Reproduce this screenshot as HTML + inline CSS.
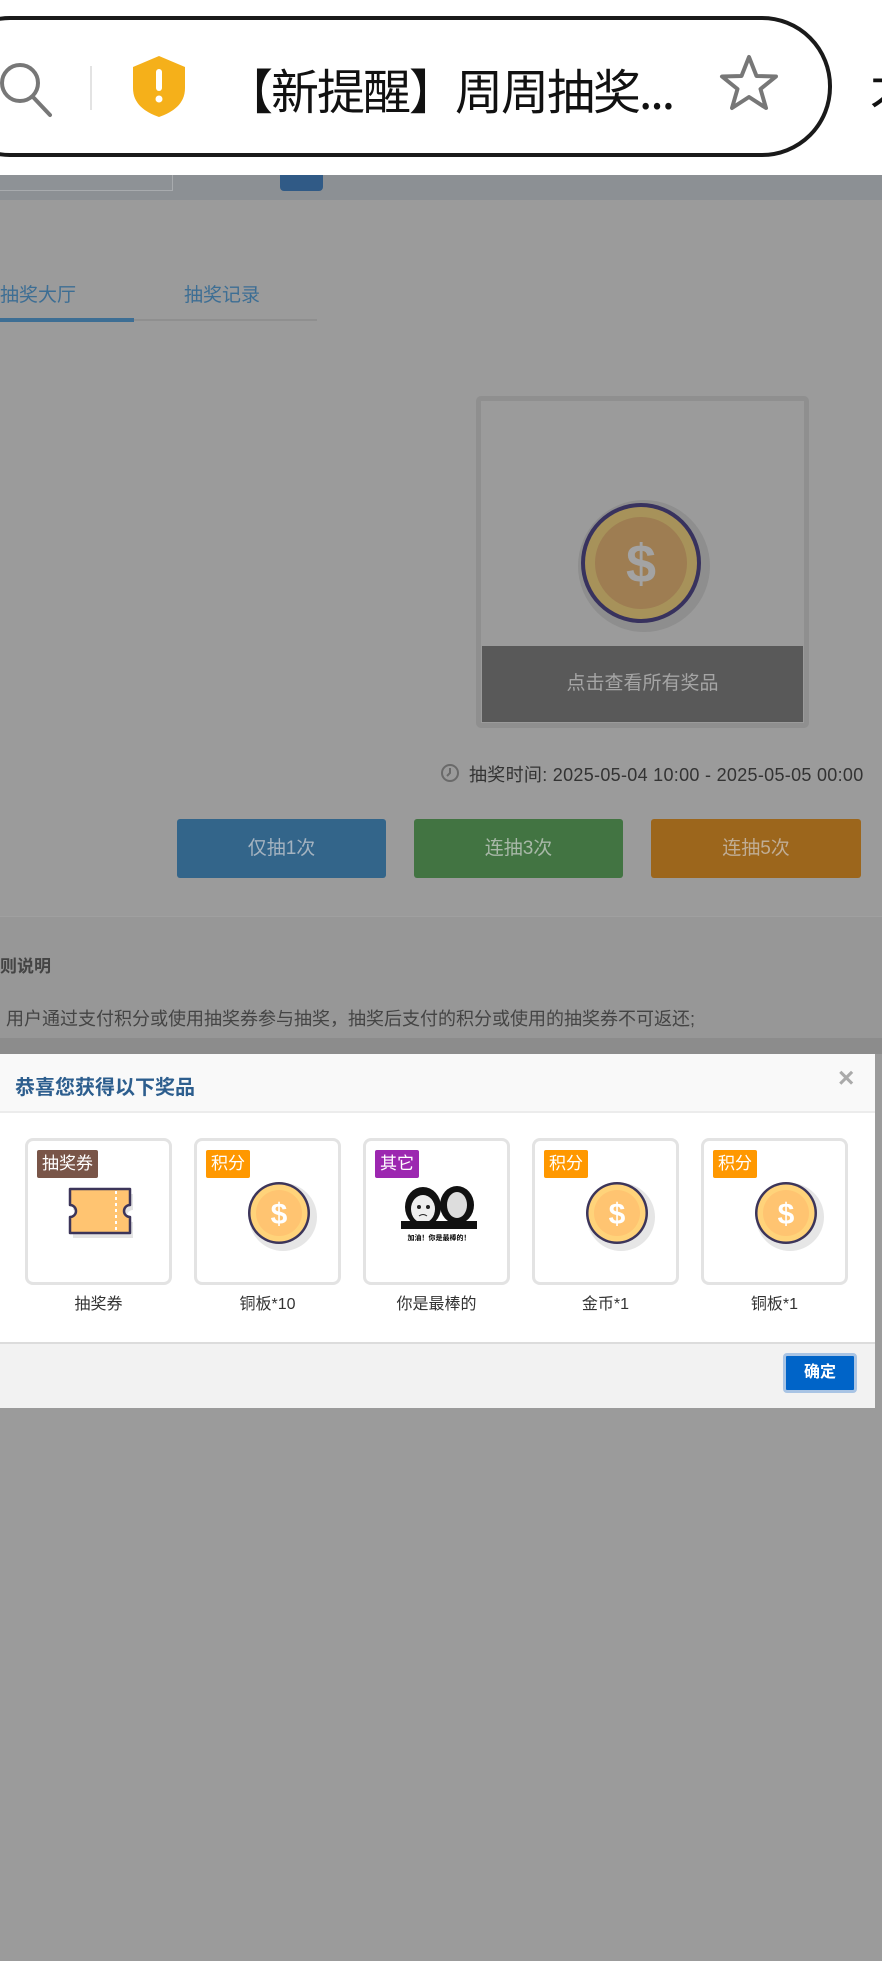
<!DOCTYPE html>
<html><head><meta charset="utf-8"><style>
*{margin:0;padding:0;box-sizing:border-box}
body{width:882px;height:1961px;position:relative;overflow:hidden;background:#9b9b9b;font-family:"Liberation Sans","Noto Sans CJK SC",sans-serif}
.a{position:absolute}
.card{position:absolute;top:1138px;width:147px;height:147px;border:3px solid #e3e3e3;border-radius:8px;background:#fff}
.badge{position:absolute;left:9px;top:9px;height:28px;color:#fff;font-size:17px;line-height:28px;padding:0 5px;border-radius:2px}
.lbl{position:absolute;top:1290px;width:147px;text-align:center;font-size:16px;color:#333}
.coin{position:absolute;left:48px;top:38px}
</style></head><body>
<div class="a" style="left:0;top:0;width:882px;height:175px;background:#fff"></div>
<div class="a" style="left:-60px;top:16px;width:892px;height:141px;border:4px solid #1a1a1a;border-radius:70px;background:#fff"></div>
<svg class="a" style="left:0;top:55px" width="60" height="65" viewBox="0 0 60 65"><circle cx="20" cy="28" r="18" fill="none" stroke="#777" stroke-width="4"/><line x1="33" y1="42" x2="50" y2="60" stroke="#777" stroke-width="4" stroke-linecap="round"/></svg>
<div class="a" style="left:90px;top:66px;width:2px;height:44px;background:#e3e3e3"></div>
<svg class="a" style="left:131px;top:54px" width="56" height="64" viewBox="0 0 56 64"><path d="M28 2 L54 13 V34 C54 50 42 58 28 63 C14 58 2 50 2 34 V13 Z" fill="#f5b01a"/><rect x="25" y="15" width="6" height="22" rx="3" fill="#fff"/><circle cx="28" cy="45" r="3.5" fill="#fff"/></svg>
<div class="a" style="left:225px;top:56px;font-size:48px;line-height:64px;color:#111;font-family:'Noto Sans CJK SC',sans-serif;letter-spacing:-2px">【新提醒】周周抽奖...</div>
<svg class="a" style="left:717px;top:52px" width="64" height="64" viewBox="0 0 64 64"><path d="M32 5 L39.5 24 L59 24.5 L43.5 37 L49 56 L32 45 L15 56 L20.5 37 L5 24.5 L24.5 24 Z" fill="none" stroke="#777" stroke-width="4" stroke-linejoin="round"/></svg>
<div class="a" style="left:870px;top:56px;font-size:48px;line-height:64px;color:#111;font-family:'Noto Sans CJK SC',sans-serif">才</div>
<div class="a" style="left:0;top:175px;width:882px;height:25px;background:#8c9094"></div>
<div class="a" style="left:-2px;top:175px;width:175px;height:16px;border:1px solid #a8abae;border-top:none;background:#8e9296"></div>
<div class="a" style="left:280px;top:175px;width:43px;height:16px;background:#305a86;border-radius:0 0 4px 4px"></div>
<div class="a" style="left:0;top:280px;font-size:19px;color:#3d6e94">抽奖大厅</div>
<div class="a" style="left:184px;top:280px;font-size:19px;color:#3d6e94">抽奖记录</div>
<div class="a" style="left:0;top:319px;width:317px;height:2px;background:#8f8f8f"></div>
<div class="a" style="left:0;top:318px;width:134px;height:4px;background:#3d6e94"></div>
<div class="a" style="left:476px;top:396px;width:333px;height:332px;border:5px solid #8f8f8f;border-radius:5px;background:#9b9b9b"></div>
<div class="a" style="left:482px;top:646px;width:321px;height:76px;background:#595959;color:#a5a5a5;font-size:19px;line-height:76px;text-align:center">点击查看所有奖品</div>
<svg class="a" style="left:572px;top:494px" width="142" height="142" viewBox="0 0 142 142"><circle cx="72" cy="72" r="66" fill="#8e8e8e"/><circle cx="69" cy="69" r="60" fill="#38325e"/><circle cx="69" cy="69" r="56" fill="#a7925a"/><circle cx="69" cy="69" r="46" fill="#9e7d52"/><text x="69" y="88" text-anchor="middle" font-size="54" font-weight="bold" fill="#a3a3a3" font-family="Liberation Sans">$</text></svg>
<svg class="a" style="left:440px;top:763px" width="20" height="20" viewBox="0 0 20 20"><circle cx="10" cy="10" r="8" fill="none" stroke="#6a6a6a" stroke-width="2"/><path d="M10 5 V10 L7 13" fill="none" stroke="#6a6a6a" stroke-width="2"/></svg>
<div class="a" style="left:469px;top:761px;font-size:18px;color:#333;letter-spacing:0.3px">抽奖时间: 2025-05-04 10:00 - 2025-05-05 00:00</div>
<div class="a" style="left:177px;top:819px;width:209px;height:59px;background:#33658a;border-radius:3px;color:#a5b3c0;font-size:19px;line-height:59px;text-align:center">仅抽1次</div>
<div class="a" style="left:414px;top:819px;width:209px;height:59px;background:#427442;border-radius:3px;color:#a8b8a8;font-size:19px;line-height:59px;text-align:center">连抽3次</div>
<div class="a" style="left:651px;top:819px;width:210px;height:59px;background:#9c661c;border-radius:3px;color:#c0ad95;font-size:19px;line-height:59px;text-align:center">连抽5次</div>
<div class="a" style="left:0;top:916px;width:882px;height:122px;background:#979797;border-top:1px solid #a0a0a0"></div>
<div class="a" style="left:0;top:952px;font-size:17px;font-weight:bold;color:#444">则说明</div>
<div class="a" style="left:6px;top:1005px;font-size:18px;color:#444">用户通过支付积分或使用抽奖券参与抽奖，抽奖后支付的积分或使用的抽奖券不可返还;</div>
<div class="a" style="left:0;top:1038px;width:882px;height:16px;background:#8c8c8c"></div>
<div class="a" style="left:0;top:1054px;width:875px;height:354px;background:#fff"></div>
<div class="a" style="left:0;top:1054px;width:875px;height:59px;background:#f9f9f9;border-bottom:2px solid #ececec"></div>
<div class="a" style="left:15px;top:1071px;font-size:20px;font-weight:bold;color:#2d5e8e">恭喜您获得以下奖品</div>
<div class="a" style="left:838px;top:1062px;font-size:28px;color:#aaa;font-weight:bold">×</div>
<div class="a" style="left:0;top:1342px;width:875px;height:66px;background:#f2f2f2;border-top:2px solid #dcdcdc"></div>
<div class="a" style="left:783px;top:1353px;width:74px;height:40px;background:#0064c8;border:3px solid #a9c4e4;border-radius:4px;color:#fff;font-size:16px;font-weight:bold;line-height:34px;text-align:center">确定</div>

<div class="card" style="left:25px"><div class="badge" style="background:#795548">抽奖券</div>
<svg class="a" style="left:36px;top:44px" width="76" height="62" viewBox="0 0 76 62"><path d="M6 4 H66 V20 A6 6 0 0 0 66 32 V48 H6 V32 A6 6 0 0 0 6 20 Z" fill="#e4e4e4" transform="translate(3,5)"/><path d="M6 4 H66 V20 A6 6 0 0 0 66 32 V48 H6 V32 A6 6 0 0 0 6 20 Z" fill="#ffc471" stroke="#3c355a" stroke-width="2.5" stroke-linejoin="round"/><line x1="52" y1="6" x2="52" y2="46" stroke="#fff" stroke-width="2" stroke-dasharray="3 3"/></svg></div>
<div class="lbl" style="left:25px">抽奖券</div>

<svg width="0" height="0" style="position:absolute"><defs><g id="cn"><circle cx="38" cy="38" r="34" fill="#e6e6e6"/><circle cx="34" cy="34" r="31" fill="#3c355a"/><circle cx="34" cy="34" r="28.5" fill="#ffd37a"/><circle cx="34" cy="34" r="23" fill="#ffc471"/><text x="34" y="45" text-anchor="middle" font-size="30" font-weight="bold" fill="#fff" font-family="Liberation Sans">$</text></g></defs></svg>

<div class="card" style="left:194px"><div class="badge" style="background:#ff9800">积分</div><svg class="coin" width="76" height="76"><use href="#cn"/></svg></div>
<div class="lbl" style="left:194px">铜板*10</div>

<div class="card" style="left:363px"><div class="badge" style="background:#9c27b0">其它</div>
<svg class="a" style="left:35px;top:44px" width="76" height="60" viewBox="0 0 76 60"><rect x="0" y="0" width="76" height="44" fill="#fff"/><ellipse cx="22" cy="22" rx="18" ry="20" fill="#111"/><ellipse cx="22" cy="24" rx="12" ry="14" fill="#eee"/><circle cx="18" cy="22" r="2" fill="#222"/><circle cx="27" cy="22" r="2" fill="#222"/><path d="M18 31 Q22 28 26 31" stroke="#222" fill="none"/><ellipse cx="56" cy="20" rx="17" ry="19" fill="#111"/><ellipse cx="56" cy="20" rx="10" ry="13" fill="#ddd"/><rect x="0" y="36" width="76" height="8" fill="#111"/><text x="38" y="55" text-anchor="middle" font-size="7" font-weight="bold" fill="#000">加油！你是最棒的！</text></svg></div>
<div class="lbl" style="left:363px">你是最棒的</div>

<div class="card" style="left:532px"><div class="badge" style="background:#ff9800">积分</div><svg class="coin" width="76" height="76"><use href="#cn"/></svg></div>
<div class="lbl" style="left:532px">金币*1</div>

<div class="card" style="left:701px"><div class="badge" style="background:#ff9800">积分</div><svg class="coin" width="76" height="76"><use href="#cn"/></svg></div>
<div class="lbl" style="left:701px">铜板*1</div>
</body></html>
